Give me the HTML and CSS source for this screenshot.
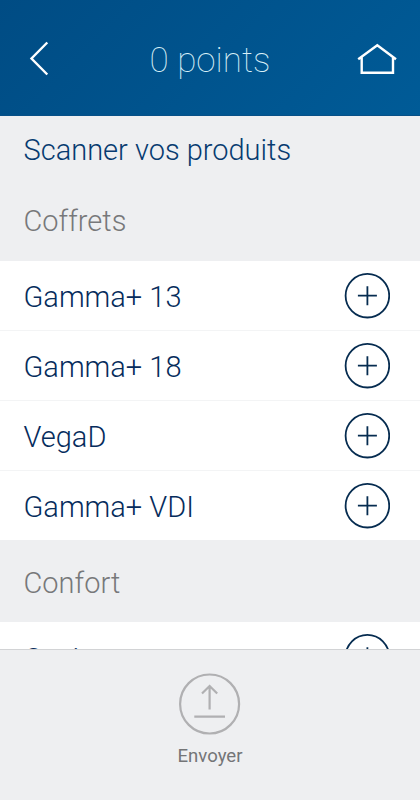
FILE: index.html
```html
<!DOCTYPE html>
<html lang="fr">
<head>
<meta charset="utf-8">
<title>Scanner vos produits</title>
<link rel="stylesheet" href="styles.css">
</head>
<body>
<svg width="0" height="0" class="defs">
  <symbol id="plus" viewBox="0 0 46 46">
    <circle cx="23.4" cy="22.7" r="21.8"/>
    <path d="M23.4 13.2V32.2M13.9 22.7H32.9"/>
  </symbol>
</svg>
<div class="app">
  <header class="bar">
    <svg class="back" width="22" height="36" viewBox="0 0 22 36"><path d="M19.3 1.5L3.5 17.5L19.3 33.5"/></svg>
    <h1>0 points</h1>
    <svg class="home" width="40" height="32" viewBox="0 0 40 32"><path d="M1.2 16.2L20.3 2.3L39 16.2M4.7 14V29.8H36V14"/></svg>
  </header>
  <main class="content">
    <h2 class="title"><span>Scanner vos produits</span></h2>
    <h3 class="section first"><span>Coffrets</span></h3>
    <ul class="list">
      <li><span>Gamma+ 13</span><svg class="add"><use href="#plus"/></svg></li>
      <li><span>Gamma+ 18</span><svg class="add"><use href="#plus"/></svg></li>
      <li><span>VegaD</span><svg class="add"><use href="#plus"/></svg></li>
      <li><span>Gamma+ VDI</span><svg class="add"><use href="#plus"/></svg></li>
    </ul>
    <h3 class="section second"><span>Confort</span></h3>
    <ul class="list next">
      <li><span>Casi</span><svg class="add"><use href="#plus"/></svg></li>
    </ul>
  </main>
  <footer class="send">
    <svg width="62" height="62" viewBox="0 0 62 62">
      <circle cx="30.6" cy="31" r="29.5"/>
      <path d="M30.6 36.5V13M23 20.5L30.6 13L38.2 20.5M15.3 43.7H46"/>
    </svg>
    <span>Envoyer</span>
  </footer>
</div>
</body>
</html>
```
FILE: styles.css
```css
* { box-sizing: border-box; margin: 0; padding: 0; }
body { font-family: Roboto, sans-serif; font-weight: 300; background: #eeeff1; }
svg { fill: none; flex: none; }
.defs { position: absolute; }
.app { display: flex; flex-direction: column; height: 800px; overflow: hidden; }
.bar {
  flex: none;
  height: 116px;
  padding: 2px 23px 0 28px;
  display: grid;
  grid-template-columns: 40px 1fr 40px;
  align-items: center;
  background: linear-gradient(135deg, #004c84, #005b97);
  border-bottom: 1px solid #075087;
}
.bar svg { stroke: #fff; stroke-width: 2.4; }
.bar .home { margin-top: 1px; }
.bar h1 {
  padding: 4px 5px 0 0;
  color: #d9f0f8;
  font-size: 35px;
  font-weight: 100;
  line-height: 42px;
  text-align: center;
  white-space: nowrap;
}
.content { flex: 1; min-height: 0; overflow: hidden; }
.title, .section { display: flex; align-items: center; padding-left: 23.5px; font-size: 29px; font-weight: 300; }
.title { height: 66px; padding-top: 1px; color: #073b70; }
.section { height: 79px; color: #77787a; }
.section.first { padding-bottom: 2px; }
.section.second { height: 82px; padding-top: 3px; }
.list { list-style: none; background: #fff; }
.list li {
  height: 70px;
  padding: 0 30px 0 23.5px;
  display: flex;
  align-items: center;
  justify-content: space-between;
  color: #062c5c;
  font-size: 29px;
  border-bottom: 1px solid #f3f4f5;
}
.list li:last-child { height: 69px; border-bottom: 0; }
.list li span { padding-top: 3px; }
.list.next li span { padding-top: 5px; }
.add { width: 46px; height: 46px; stroke: #062c50; stroke-width: 1.8; }
.send {
  flex: none;
  height: 151px;
  padding-top: 23px;
  display: flex;
  flex-direction: column;
  align-items: center;
  border-top: 1px solid #d2d3d5;
  color: #747577;
  font-size: 18.6px;
  font-weight: 400;
  line-height: 22px;
}
.send svg { stroke: #b0b0b2; stroke-width: 2.2; }
.send span { margin-top: 10px; }
```
